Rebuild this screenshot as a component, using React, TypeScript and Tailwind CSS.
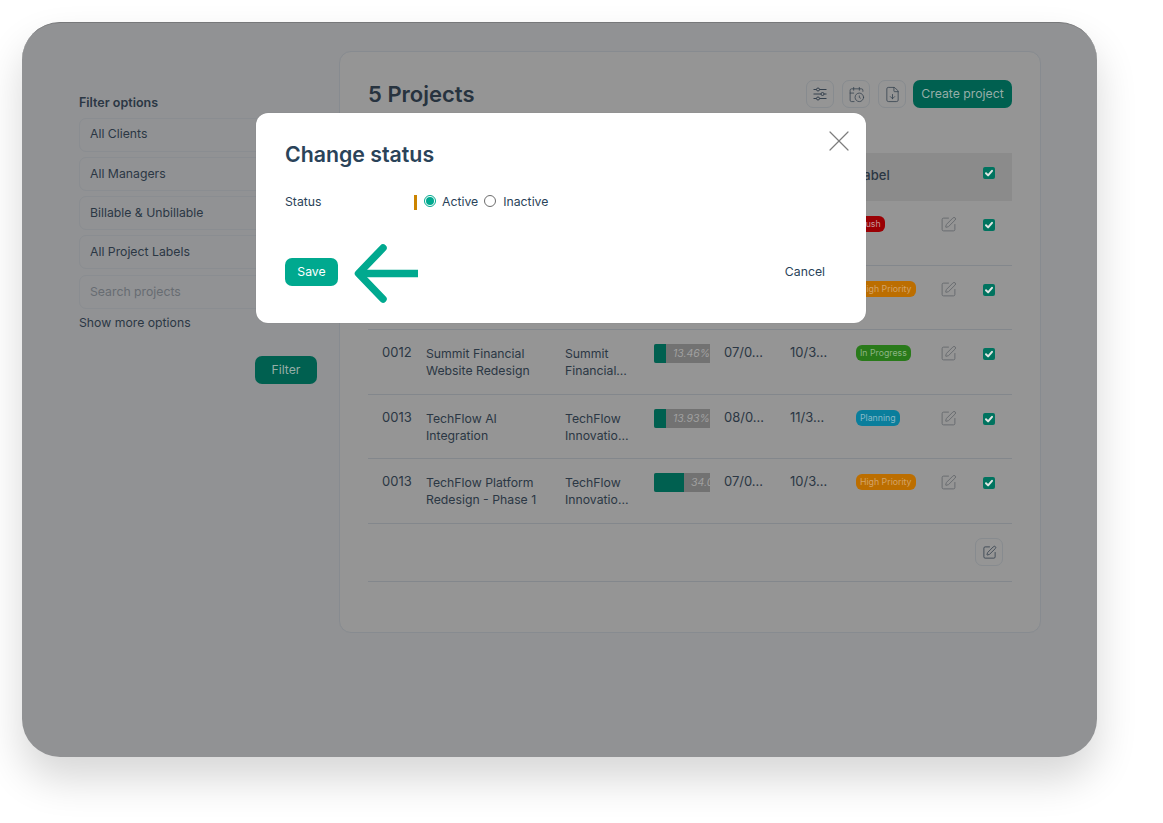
import React from "react";
import { CalendarClock, FileDown, SquarePen, X } from "lucide-react";

const rows = [
  { id: "0010", name: ["Northwind Data", "Migration"], client: ["Northwind", "Logistics…"], fill: 12, pct: "13.20%", start: "07/0…", end: "10/3…", label: "Rush", cls: "bg-[#9a0004] text-[#c49a9a]" },
  { id: "0011", name: ["Atlas Mobile", "App Launch"], client: ["Atlas", "Retail…"], fill: 12, pct: "13.70%", start: "07/0…", end: "10/3…", label: "High Priority", cls: "bg-[#bc6e00] text-[#d4a468]" },
  { id: "0012", name: ["Summit Financial", "Website Redesign"], client: ["Summit", "Financial…"], fill: 12, pct: "13.46%", start: "07/0…", end: "10/3…", label: "In Progress", cls: "bg-[#297a1a] text-[#8cb484]" },
  { id: "0013", name: ["TechFlow AI", "Integration"], client: ["TechFlow", "Innovatio…"], fill: 12, pct: "13.93%", start: "08/0…", end: "11/3…", label: "Planning", cls: "bg-[#0a7e9c] text-[#88bac8]" },
  { id: "0013", name: ["TechFlow Platform", "Redesign - Phase 1"], client: ["TechFlow", "Innovatio…"], fill: 30, pct: "34.00%", start: "07/0…", end: "10/3…", label: "High Priority", cls: "bg-[#bc6e00] text-[#d4a468]" },
];

const filters = ["All Clients", "All Managers", "Billable & Unbillable", "All Project Labels"];

function Check() {
  return (
    <span className="flex h-3 w-3 items-center justify-center rounded-[2px] bg-[#00735f]">
      <svg viewBox="0 0 12 12" className="h-3 w-3" fill="none" stroke="#dfe5e3" strokeWidth="2" strokeLinecap="round" strokeLinejoin="round">
        <path d="M3 6.3 5.1 8.4 9 3.8" />
      </svg>
    </span>
  );
}

function Sliders() {
  return (
    <svg viewBox="0 0 16 16" className="h-4 w-4" fill="none" stroke="#34404d" strokeWidth="1">
      <path d="M1.5 3.5h3M7.5 3.5h7M1.5 8h7.5M12 8h2.5M1.5 12.5h3M7.5 12.5h7" />
      <circle cx="6" cy="3.5" r="1.5" />
      <circle cx="10.5" cy="8" r="1.5" />
      <circle cx="6" cy="12.5" r="1.5" />
    </svg>
  );
}

function IconButton({ children }: { children: React.ReactNode }) {
  return (
    <span className="flex h-7 w-7 items-center justify-center rounded-[7px] border border-[#878b8f]">
      {children}
    </span>
  );
}

export default function App() {
  return (
    <div className="h-[823px] w-[1163px] overflow-hidden bg-white p-[22px] font-['Inter',sans-serif] text-[12.25px] text-[#2b3744]">
      <div className="relative flex h-[735px] w-[1075px] rounded-[38px] border-t border-[#77787a] bg-[#919294] shadow-[0_22px_40px_rgba(0,0,0,0.16)]">
        <aside className="ml-[57px] mt-[72px] w-[239px] shrink-0">
          <div className="h-[22.5px] text-[12.5px] font-semibold leading-[16px]">Filter options</div>
          <div className="flex flex-col gap-[5.3px]">
            {filters.map((f) => (
              <div key={f} className="flex h-[34px] items-center rounded-[7px] border border-[#8a8d91] px-[10px]">{f}</div>
            ))}
            <div className="flex h-[34px] items-center rounded-[7px] border border-[#8a8d91] px-[10px] text-[#676c72]">Search projects</div>
          </div>
          <div className="mt-[6.5px] leading-[16px]">Show more options</div>
          <div className="mt-[25px] flex justify-end pr-px">
            <span className="flex h-7 w-[62px] items-center justify-center rounded-[7px] bg-[#006050] text-[#96aea8]">Filter</span>
          </div>
        </aside>

        <main className="ml-[21px] mt-[28px] h-[582px] w-[702px] shrink-0 rounded-[12px] border border-[#878b90] bg-[#959595] px-[28px] pt-[28px]">
          <div className="flex h-7 items-center">
            <h1 className="text-[22px] font-semibold leading-7 text-[#27333f]">5 Projects</h1>
            <div className="ml-auto flex items-center gap-2">
              <IconButton><Sliders /></IconButton>
              <IconButton><CalendarClock size={17} strokeWidth={1.1} color="#34404d" /></IconButton>
              <IconButton><FileDown size={17} strokeWidth={1.1} color="#34404d" /></IconButton>
              <span className="ml-[-1px] flex h-7 w-[99px] items-center justify-center rounded-[7px] bg-[#006050] text-[#96aea8]">Create project</span>
            </div>
          </div>

          <div className="mt-[45px] grid h-[48px] grid-cols-[58px_139px_89px_70px_66px_66px_84px_43px_29px] items-center bg-[#8b8b8b]">
            <span className="pl-[14px]">ID</span>
            <span>Project</span>
            <span>Client</span>
            <span>Progress</span>
            <span>Start</span>
            <span>End</span>
            <span className="-mt-[2px] text-[13px] font-medium">Label</span>
            <span />
            <span className="-mt-[8px]"><Check /></span>
          </div>

          {rows.map((r, i) => (
            <div key={i} className="grid h-[64.5px] grid-cols-[58px_139px_89px_70px_66px_66px_84px_43px_29px] border-b border-[#83878c] pt-[15px] leading-[17.25px]">
              <span className="-mt-px pl-[14px] text-[13px]">{r.id}</span>
              <span>{r.name[0]}<br />{r.name[1]}</span>
              <span>{r.client[0]}<br />{r.client[1]}</span>
              <span className="-mt-px flex h-[19px] w-[56px] overflow-hidden rounded-l-[2px] bg-[#727272]">
                <span className="h-full shrink-0 bg-[#006050]" style={{ width: r.fill }} />
                <span className="ml-[7px] whitespace-nowrap text-[10.5px] italic leading-[19px] text-[#a0a0a0]">{r.pct}</span>
              </span>
              <span className="-mt-px text-[13px]">{r.start}</span>
              <span className="-mt-px text-[13px]">{r.end}</span>
              <span className="-mt-[2px]">
                <span className={`inline-flex h-4 items-center rounded-[6px] px-1 text-[8.75px] leading-none ${r.cls}`}>{r.label}</span>
              </span>
              <span><SquarePen size={17} strokeWidth={1.2} color="#62666a" /></span>
              <span className="mt-[3px]"><Check /></span>
            </div>
          ))}

          <div className="flex h-[58px] items-center justify-end border-b border-[#83878c] pr-[9px]">
            <IconButton><SquarePen size={15} strokeWidth={1.3} color="#34404d" /></IconButton>
          </div>
        </main>

        <div className="absolute left-[234px] top-[90px] flex h-[210px] w-[610px] flex-col rounded-[12px] bg-white pl-[29px] pr-[41px] pt-[27px] text-[#2a4359] shadow-[0_0_1px_rgba(0,0,0,0.2)]">
          <X size={36} strokeWidth={0.8} color="#7d7d7d" className="absolute right-[9.5px] top-[9.5px]" />
          <h2 className="text-[21.3px] font-semibold leading-7">Change status</h2>
          <div className="mt-[26px] flex h-[16px] items-center">
            <span className="w-[129px]">Status</span>
            <span className="h-[15px] w-[3px] bg-[#cc8400]" />
            <span className="ml-[7px] flex h-3 w-3 -translate-y-[1px] items-center justify-center rounded-full border border-[#00a98f]">
              <span className="h-2 w-2 rounded-full bg-[#00a98f]" />
            </span>
            <span className="ml-[6px]">Active</span>
            <span className="ml-[6px] h-3 w-3 -translate-y-[1px] rounded-full border border-[#6d6d6d]" />
            <span className="ml-[7px]">Inactive</span>
          </div>
          <div className="mt-[32px] flex items-center">
            <span className="flex h-7 w-[53px] items-center justify-center rounded-[7px] bg-[#00a98f] text-white">Save</span>
            <svg viewBox="0 0 64 60" className="ml-[16px] h-[60px] w-[64px] translate-y-[1.5px]" fill="none" stroke="#00a98f" strokeWidth="7.5" strokeLinecap="round" strokeLinejoin="round">
              <path d="M29 4.5 4.5 30 29 55.5" />
              <path d="M4.5 30H64" strokeLinecap="butt" />
            </svg>
            <span className="ml-auto">Cancel</span>
          </div>
        </div>
      </div>
    </div>
  );
}
